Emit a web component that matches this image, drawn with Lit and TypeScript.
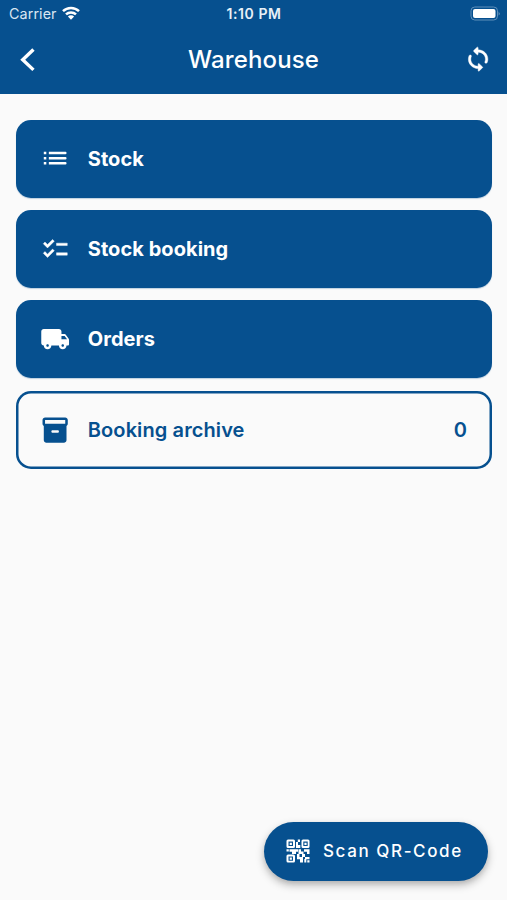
import { LitElement, html, css, svg } from "lit";
import { customElement, property } from "lit/decorators.js";

const icons: Record<string, unknown> = {
  list: svg`<path d="M3 7h2v2H3zM3 11h2v2H3zM3 15h2v2H3zM7 7h13.200a.8.8 0 0 1 .8.8v.4a.8.8 0 0 1-.8.8H7zM7 11h13.200a.8.8 0 0 1 .8.8v.4a.8.8 0 0 1-.8.8H7zM7 15h13.200a.8.8 0 0 1 .8.8v.4a.8.8 0 0 1-.8.8H7z"/>`,
  checklist: svg`<g transform="translate(.7 .6) scale(.95)"><path d="M22 7h-9v2h9V7zm0 8h-9v2h9v-2zM5.540 11 2 7.460l1.410-1.410 2.120 2.120 4.240-4.240 1.410 1.410L5.540 11zm0 8L2 15.460l1.410-1.410 2.120 2.120 4.240-4.240 1.410 1.410L5.540 19z" stroke="currentColor" stroke-width=".35" stroke-linejoin="round"/></g>`,
  truck: svg`<path d="M19.500 8H17V6c0-1.100-.9-2-2-2H3c-1.100 0-2 .9-2 2v9c0 1.100.9 2 2 2 0 1.660 1.340 3 3 3s3-1.340 3-3h6c0 1.660 1.340 3 3 3s3-1.340 3-3h1c.55 0 1-.45 1-1v-3.330c0-.43-.14-.85-.4-1.200L20.300 8.400c-.19-.25-.49-.4-.8-.4zM6 18c-.55 0-1-.45-1-1s.45-1 1-1 1 .45 1 1-.45 1-1 1zm13.500-8.500 1.960 2.500H17V9.500h2.500zM18 18c-.55 0-1-.45-1-1s.45-1 1-1 1 .45 1 1-.45 1-1 1z"/>`,
  archive: svg`<path fill-rule="evenodd" d="M20 2H4c-1 0-2 .9-2 2v3.010c0 .72.43 1.340 1 1.690V20c0 1.100 1.100 2 2 2h14c.9 0 2-.9 2-2V8.700c.57-.35 1-.97 1-1.690V4c0-1.100-1-2-2-2zm-6 12h-4c-.55 0-1-.45-1-1s.45-1 1-1h4c.55 0 1 .45 1 1s-.45 1-1 1zm6-7H4V4h16v3z"/>`,
  sync: svg`<g transform="translate(.4 .9) scale(.965 .925)"><path d="M12 4V2.210c0-.45-.54-.67-.85-.35l-2.800 2.790c-.2.200-.2.510 0 .71l2.790 2.790c.32.310.86.090.86-.36V6c3.310 0 6 2.690 6 6 0 .79-.15 1.560-.44 2.250-.15.360-.04.770.23 1.040.51.510 1.370.330 1.640-.34.370-.91.570-1.910.570-2.950 0-4.420-3.580-8-8-8zm0 14c-3.310 0-6-2.690-6-6 0-.79.150-1.560.440-2.250.150-.36.040-.77-.23-1.040-.51-.51-1.370-.33-1.640.34C4.200 9.960 4 10.960 4 12c0 4.420 3.580 8 8 8v1.790c0 .45.540.67.850.35l2.790-2.790c.2-.2.200-.51 0-.71l-2.790-2.790c-.31-.31-.85-.09-.85.360V18z" stroke="currentColor" stroke-width=".35"/></g>`,
  back: svg`<path d="M17 3.500 8.500 11.600l8.500 8.100" fill="none" stroke="currentColor" stroke-width="2.700"/>`,
};

@customElement("app-icon")
class AppIcon extends LitElement {
  @property() name = "";
  static styles = css`
    :host { display: block; flex: none; width: 30.300px; height: 30.300px; }
    svg { display: block; width: 100%; height: 100%; fill: currentColor; }
  `;
  render() {
    return html`<svg viewBox="0 0 24 24">${icons[this.name]}</svg>`;
  }
}

@customElement("qr-icon")
class QrIcon extends LitElement {
  static styles = css`
    :host { display: block; flex: none; width: 24px; height: 24px; }
    svg { display: block; width: 100%; height: 100%; fill: currentColor; }
  `;
  render() {
    return html`<svg viewBox="0 0 24 24">
      <path fill-rule="evenodd" d="M2 .5h5.500A1.500 1.500 0 0 1 9 2v5.500A1.500 1.500 0 0 1 7.500 9H2A1.500 1.500 0 0 1 .5 7.500V2A1.500 1.500 0 0 1 2 .5zm.5 2v4.500H7V2.500zM17 .5h5A1.500 1.500 0 0 1 23.500 2v5.500A1.500 1.500 0 0 1 22 9h-5a1.500 1.500 0 0 1-1.500-1.500V2A1.500 1.500 0 0 1 17 .5zm.3 2v4.500h4.400V2.500zM2 15.500h5.500A1.500 1.500 0 0 1 9 17v5a1.500 1.500 0 0 1-1.500 1.500H2A1.500 1.500 0 0 1 .5 22v-5A1.500 1.500 0 0 1 2 15.500zm.5 2v4.200H7v-4.200z"/>
      <path d="M3.700 3.700h2.200v2.200H3.700zM18.400 3.700h2.200v2.200h-2.200zM3.700 18.500h2.200v2.200H3.700zM11.800.5H14V3h-2.200zM10 3h2v3h2.300v3H10zM.5 10.200h2.300v2.300H.5zM3.500 10.200H12v2.600h-2V15H6v-2.200H3.500zM12.500 10.200H15v2.300h2.500V15h-5zM18 10.200h5.500V15H21v-2.300h-3zM11 15h2.500v3H17v2.300h-6zM16 15h3v3h4.500v2.300H19V18h-3zM14 20.300h3v3.200h-3zM18.300 20h2v3.500h-2zM21.300 21.300h2.200v2.200h-2.200z"/>
    </svg>`;
  }
}

@customElement("app-root")
class AppRoot extends LitElement {
  static styles = css`
    :host { display: flex; flex-direction: column; height: 900px; box-sizing: border-box; background: #fafafa; color: #fff; font-family: Inter, "Liberation Sans", sans-serif; }
    header { background: #06508f; height: 93.500px; flex: none; }
    .status { display: grid; grid-template-columns: 1fr auto 1fr; align-items: center; height: 27px; padding: 0 6px 0 9px; font-size: 14.300px; line-height: 27px; }
    .carrier { display: flex; align-items: center; gap: 5.500px; letter-spacing: .1px; color: #d9e6f2; }
    .wifi { width: 18px; height: 14px; margin-top: -1px; }
    .time { font-weight: 600; font-size: 14px; letter-spacing: .55px; margin-right: 2px; color: #e8f0f7; }
    .battery { justify-self: end; width: 31px; height: 15px; margin-top: -1px; }
    .bar { display: grid; grid-template-columns: 1fr auto 1fr; align-items: center; height: 66px; padding: 0 14px 0 12px; }
    .title { font-size: 24px; font-weight: 500; letter-spacing: .15px; margin-right: -2px; margin-top: -1px; }
    .sync { justify-self: end; margin-top: -1px; }
    main { display: flex; flex-direction: column; gap: 12.400px; padding: 26px 15px 0 15.500px; flex: 1; }
    .card { display: flex; align-items: center; box-sizing: border-box; height: 78px; border-radius: 15px; background: #06508f; padding: 0 25px 0 24px; font-size: 20px; font-weight: 700; letter-spacing: .05px; box-shadow: 0 1px 1px #06508f40; }
    .card .label { margin-left: 18px; flex: 1; }
    .outline { background: transparent; color: #06508f; font-weight: 600; letter-spacing: .1px; box-shadow: inset 0 0 0 2.500px #06508f; }
    .fab { align-self: flex-end; flex: none; display: flex; align-items: center; box-sizing: border-box; width: 224px; height: 58.500px; margin: 0 19.500px 19.500px 0; padding-left: 22px; gap: 13.500px; border-radius: 30px; background: #06508f; font-size: 17px; font-weight: 500; letter-spacing: 1.600px; box-shadow: 0 4px 8px #0004, 0 2px 4px #0001; white-space: nowrap; }
  `;
  render() {
    const items = [
      ["list", "Stock"],
      ["checklist", "Stock booking"],
      ["truck", "Orders"],
    ];
    return html`
      <header>
        <div class="status">
          <div class="carrier"><span>Carrier</span>
            <svg class="wifi" viewBox="0 0 18 14"><g fill="none" stroke="#fff" stroke-width="2.500"><path d="M1 5.200a11.400 11.400 0 0 1 16 0"/><path d="M4 8.400a7.200 7.200 0 0 1 10 0"/></g><path fill="#fff" d="M9 13.700 5.900 10.600a4.400 4.400 0 0 1 6.200 0z"/></svg>
          </div>
          <div class="time">1:10 PM</div>
          <svg class="battery" viewBox="0 0 31 15"><rect x="1" y="1" width="26.500" height="13" rx="3.800" fill="none" stroke="#5f8fba"/><rect x="3" y="2.900" width="22.500" height="9.200" rx="2" fill="#fff"/><path d="M28.700 5.500q1.800 2 0 4z" fill="#7ba2c5"/></svg>
        </div>
        <div class="bar">
          <app-icon name="back"></app-icon>
          <div class="title">Warehouse</div>
          <app-icon class="sync" name="sync"></app-icon>
        </div>
      </header>
      <main>
        ${items.map(([icon, label]) => html`<div class="card"><app-icon name=${icon}></app-icon><span class="label">${label}</span></div>`)}
        <div class="card outline"><app-icon name="archive"></app-icon><span class="label">Booking archive</span><span>0</span></div>
      </main>
      <div class="fab"><qr-icon></qr-icon><span>Scan QR-Code</span></div>
    `;
  }
}
